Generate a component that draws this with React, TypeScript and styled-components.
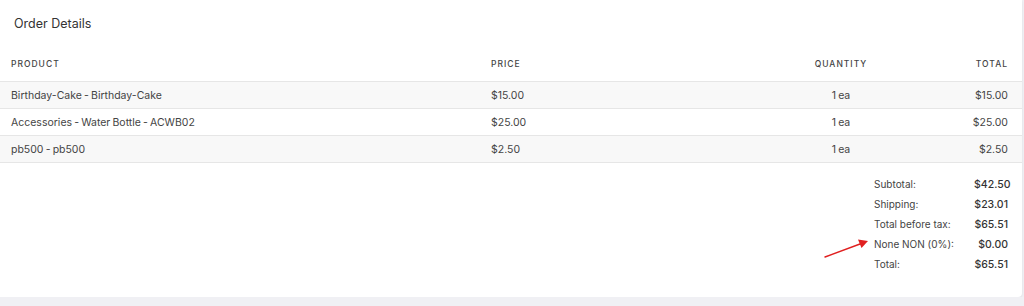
import React, { ReactElement } from 'react';
import styled, { createGlobalStyle } from 'styled-components';

interface LineItem {
  product: string;
  price: string;
  quantity: string;
  total: string;
}

interface CellProps {
  align?: 'left' | 'center' | 'right';
}

interface RowProps {
  striped: boolean;
}

const items: LineItem[] = [
  { product: 'Birthday-Cake - Birthday-Cake', price: '$15.00', quantity: '1 ea', total: '$15.00' },
  { product: 'Accessories - Water Bottle - ACWB02', price: '$25.00', quantity: '1 ea', total: '$25.00' },
  { product: 'pb500 - pb500', price: '$2.50', quantity: '1 ea', total: '$2.50' },
];

const summary = [
  { label: 'Subtotal:', value: '$42.50' },
  { label: 'Shipping:', value: '$23.01' },
  { label: 'Total before tax:', value: '$65.51' },
  { label: 'None NON (0%):', value: '$0.00' },
  { label: 'Total:', value: '$65.51' },
];

const COLUMNS = '480px 280px 140px 97px';

const GlobalStyle = createGlobalStyle`
  body {
    margin: 0;
    background: #f0f0f4;
    font-family: Inter, 'Liberation Sans', sans-serif;
    color: #444;
  }
`;

const Card = styled.div`
  position: relative;
  width: 1022px;
  height: 297px;
  background: #fff;
  border-radius: 0 0 4px 0;
  box-shadow: 0 1px 3px rgba(0, 0, 0, 0.08);
`;

const Title = styled.h2`
  margin: 0;
  padding: 16px 14px 0;
  height: 30px;
  font-size: 12.5px;
  font-weight: 400;
  color: #333;
`;

const Grid = styled.div`
  display: grid;
  grid-template-columns: ${COLUMNS};
  padding: 0 14px 0 11px;
  align-items: center;
`;

const HeadRow = styled(Grid)`
  height: 35px;
  border-bottom: 1px solid #e6e6e6;
`;

const BodyRow = styled(Grid)<RowProps>`
  height: 26px;
  border-bottom: 1px solid #e6e6e6;
  background: ${(props) => (props.striped ? '#f8f8f8' : '#fff')};
`;

const HeadCell = styled.div<CellProps>`
  font-size: 8.5px;
  font-weight: 500;
  letter-spacing: 1px;
  text-transform: uppercase;
  color: #444;
  text-align: ${(props) => props.align ?? 'left'};
`;

const Cell = styled.div<CellProps>`
  font-size: 10.5px;
  word-spacing: -0.8px;
  color: #444;
  text-align: ${(props) => props.align ?? 'left'};
  white-space: nowrap;
`;

const Summary = styled.div`
  display: flex;
  justify-content: flex-end;
  padding: 11px 14px 0 0;
`;

const SummaryGrid = styled.div`
  display: grid;
  grid-template-columns: 100px 34px;
  grid-auto-rows: 20px;
  align-items: center;
`;

const SummaryLabel = styled.div`
  font-size: 10px;
  color: #444;
`;

const SummaryValue = styled.div`
  font-size: 10.5px;
  font-weight: 500;
  color: #333;
  text-align: right;
  white-space: nowrap;
`;

const Arrow = styled.svg`
  position: absolute;
  left: 822px;
  top: 236px;
`;

export default function App(): ReactElement {
  return (
    <>
      <GlobalStyle />
      <Card>
        <Title>Order Details</Title>
        <HeadRow>
          <HeadCell>Product</HeadCell>
          <HeadCell>Price</HeadCell>
          <HeadCell align="center">Quantity</HeadCell>
          <HeadCell align="right">Total</HeadCell>
        </HeadRow>
        {items.map((item, index) => (
          <BodyRow key={item.product} striped={index % 2 === 0}>
            <Cell>{item.product}</Cell>
            <Cell>{item.price}</Cell>
            <Cell align="center">{item.quantity}</Cell>
            <Cell align="right">{item.total}</Cell>
          </BodyRow>
        ))}
        <Summary>
          <SummaryGrid>
            {summary.map((line) => (
              <React.Fragment key={line.label}>
                <SummaryLabel>{line.label}</SummaryLabel>
                <SummaryValue>{line.value}</SummaryValue>
              </React.Fragment>
            ))}
          </SummaryGrid>
        </Summary>
        <Arrow width="50" height="26" viewBox="0 0 50 26">
          <line x1="3" y1="21" x2="38" y2="8" stroke="#e02020" strokeWidth="1.4" strokeLinecap="round" />
          <path d="M46 5 L36 3.5 L39.5 12 Z" fill="#e02020" />
        </Arrow>
      </Card>
    </>
  );
}
